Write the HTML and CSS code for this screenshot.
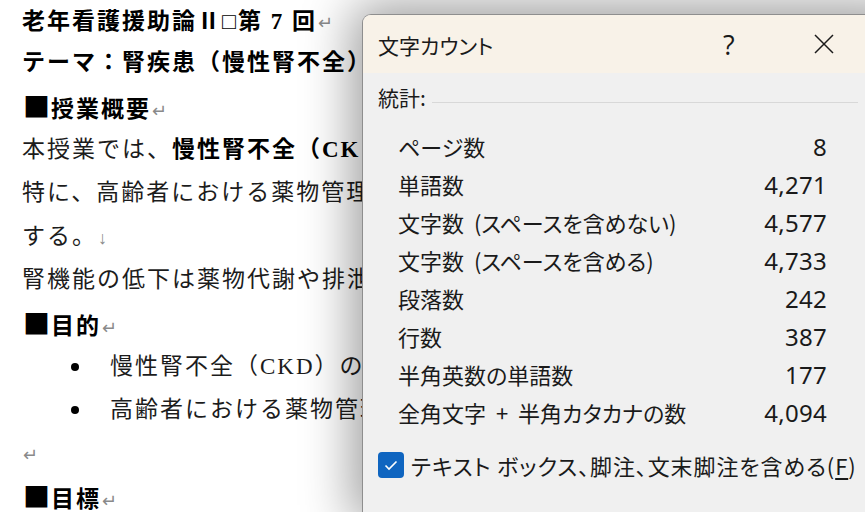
FILE: index.html
```html
<!DOCTYPE html>
<html lang="ja">
<head>
<meta charset="utf-8">
<title>文字カウント</title>
<link rel="stylesheet" href="styles.css">
</head>
<body>
<div class="doc">
  <p class="line title-line b">老年看護援助論Ⅱ□第 7 回<span class="mark">↵</span></p>
  <p class="line b">テーマ：腎疾患（慢性腎不全）</p>
  <p class="line head"><span class="sq">■</span>授業概要<span class="mark">↵</span></p>
  <p class="line">本授業では、<b>慢性腎不全（CK</b></p>
  <p class="line">特に、高齢者における薬物管理</p>
  <p class="line">する。<span class="mark">↓</span></p>
  <p class="line">腎機能の低下は薬物代謝や排泄</p>
  <p class="line head"><span class="sq">■</span>目的<span class="mark">↵</span></p>
  <ul class="bullets">
    <li class="line">慢性腎不全（CKD）の</li>
    <li class="line">高齢者における薬物管理</li>
  </ul>
  <p class="line"><span class="mark">↵</span></p>
  <p class="line head last"><span class="sq">■</span>目標<span class="mark">↵</span></p>
</div>

<div class="dialog">
  <div class="titlebar">
    <span class="title">文字カウント</span>
    <span class="help">?</span>
    <span class="close">
      <svg width="20" height="20" viewBox="0 0 20 20"><path d="M1 1 L19 19 M19 1 L1 19" stroke="#1b1b1b" stroke-width="1.5" fill="none"/></svg>
    </span>
  </div>
  <div class="body">
    <div class="group-head"><span>統計:</span><span class="rule"></span></div>
    <div class="stats">
      <span class="lbl">ページ数</span><span class="val">8</span>
      <span class="lbl">単語数</span><span class="val">4,271</span>
      <span class="lbl">文字数 (スペースを含めない)</span><span class="val">4,577</span>
      <span class="lbl">文字数 (スペースを含める)</span><span class="val">4,733</span>
      <span class="lbl">段落数</span><span class="val">242</span>
      <span class="lbl">行数</span><span class="val">387</span>
      <span class="lbl">半角英数の単語数</span><span class="val">177</span>
      <span class="lbl">全角文字 + 半角カタカナの数</span><span class="val">4,094</span>
    </div>
    <div class="check">
      <span class="box"><svg width="26" height="26" viewBox="0 0 26 26"><path d="M7.5 13.5 L11 17 L18.5 9.5" stroke="#fff" stroke-width="1.6" fill="none"/></svg></span>
      <span class="check-text">テキスト ボックス、脚注、文末脚注を含める(<u>F</u>)</span>
    </div>
  </div>
</div>
</body>
</html>
```

FILE: styles.css
```css
* { box-sizing: border-box; }
html, body {
  margin: 0;
  padding: 0;
  width: 865px;
  height: 512px;
  overflow: hidden;
  background: #fff;
}
.doc {
  padding: 2px 0 0 22px;
  font-family: "Liberation Serif", "Noto Sans CJK JP", serif;
  font-size: 23px;
  letter-spacing: 2px;
  color: #1c1c1c;
  white-space: nowrap;
}
.line {
  margin: 0;
  height: 43.4px;
  line-height: 43.4px;
}
.title-line {
  height: 39px;
  line-height: 40px;
}
.last {
  height: 37px;
  padding-top: 5px;
  line-height: 32px;
}
.b, b { font-weight: 700; color: #000; }
.head { font-weight: 700; color: #000; }
.sq {
  font-family: "Noto Sans CJK JP", sans-serif;
  font-size: 27px;
  letter-spacing: 1px;
  margin-left: 1px;
}
.mark {
  color: #8a8a8a;
  font-weight: 400;
  font-size: 18px;
  letter-spacing: 0;
  margin-left: 1px;
}
.bullets {
  margin: 0;
  padding: 0 0 0 88px;
  list-style: none;
}
.bullets li {
  position: relative;
}
.bullets li::before {
  content: "";
  position: absolute;
  left: -39px;
  top: 18px;
  width: 8px;
  height: 8px;
  border-radius: 50%;
  background: #000;
}

.dialog {
  position: absolute;
  left: 362px;
  top: 14px;
  width: 540px;
  height: 498px;
  border: 1px solid #8e8e8e;
  border-bottom-width: 0;
  border-radius: 9px 9px 0 0;
  background: #f0f0f0;
  box-shadow: 0 0 50px 10px rgba(0, 0, 0, 0.38);
  overflow: hidden;
  font-family: "Noto Sans CJK JP", sans-serif;
  font-feature-settings: "palt" 1;
  color: #1a1a1a;
}
.titlebar {
  height: 58px;
  background: #f8f2e8;
  display: flex;
  align-items: center;
  padding-left: 15px;
}
.title {
  font-size: 21px;
  flex: 1;
  padding-top: 1px;
}
.help {
  font-family: "Open Sans", sans-serif;
  font-size: 27px;
  width: 20px;
  margin-right: 71px;
}
.close {
  display: flex;
  margin-right: 67px;
}
.body {
  padding: 5px 0 0 15px;
}
.group-head {
  display: flex;
  align-items: center;
  height: 38px;
  font-size: 21px;
  width: 480px;
}
.rule {
  flex: 1;
  height: 1px;
  background: #d8d8d8;
  margin: 10px 0 0 6px;
}
.stats {
  margin: 11px 0 0 20px;
  width: 429px;
  display: grid;
  grid-template-columns: 1fr auto;
  grid-auto-rows: 38px;
  align-items: center;
  font-size: 22px;
}
.lbl {
  word-spacing: 5px;
}
.val {
  font-family: "Noto Sans", sans-serif;
  font-size: 24px;
  letter-spacing: 0.3px;
  text-align: right;
}
.check {
  display: flex;
  align-items: center;
  margin-top: 21px;
  height: 26px;
}
.box {
  width: 26px;
  height: 26px;
  border-radius: 4px;
  background: #0f65c0;
  display: flex;
}
.check-text {
  font-size: 22px;
  letter-spacing: 0.9px;
  margin-left: 7px;
}
.check-text u {
  text-underline-offset: 3px;
}
```
